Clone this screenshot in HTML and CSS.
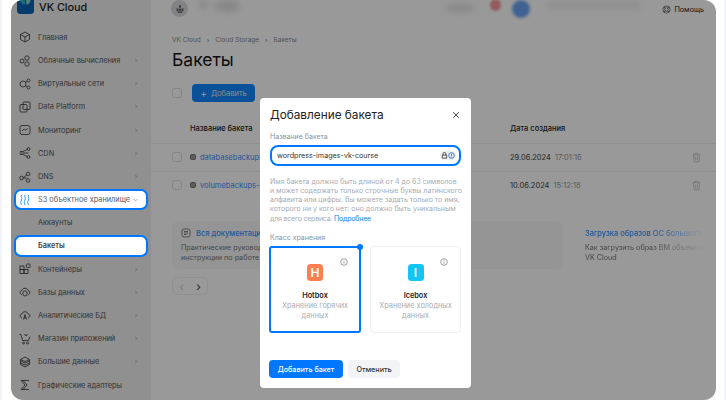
FILE: index.html
```html
<!DOCTYPE html>
<html lang="ru">
<head>
<meta charset="utf-8">
<title>VK Cloud</title>
<link rel="stylesheet" href="styles.css">
</head>
<body>
<div class="window">
  <aside class="sidebar">
    <div class="brand">
      <svg class="brand-logo" viewBox="0 0 17 17"><rect width="17" height="17" rx="3.5" fill="#0a63b8"/><path d="M3 0h5v7.5C5 7.500 3 5 3 0z" fill="#33b5c9"/><path d="M14 0H9.200v7.500C12 7.500 14 5 14 0z" fill="#7fd8d0"/></svg>
      <span>VK Cloud</span>
    </div>
    <nav class="nav">
      <a class="nav-item"><svg class="ni" viewBox="0 0 12 12"><path d="M6 1l4.500 2.500v5L6 11 1.500 8.500v-5zM1.500 3.500L6 6l4.500-2.500M6 6v5"/></svg><span class="nt">Главная</span></a>
      <a class="nav-item"><svg class="ni" viewBox="0 0 12 12"><circle cx="8" cy="3" r="2.200"/><circle cx="8" cy="9" r="2.200"/><circle cx="3" cy="6" r="2"/></svg><span class="nt">Облачные вычисления</span><i class="chev"></i></a>
      <a class="nav-item"><svg class="ni" viewBox="0 0 12 12"><circle cx="4" cy="6" r="3"/><circle cx="9.500" cy="2.500" r="1.500"/><circle cx="9.500" cy="9.500" r="1.500"/><path d="M6.500 4.300L8.300 3.300M6.500 7.700l1.800 1"/></svg><span class="nt">Виртуальные сети</span><i class="chev"></i></a>
      <a class="nav-item"><svg class="ni" viewBox="0 0 12 12"><rect x="1" y="3.500" width="7" height="7.500" rx="1"/><rect x="4" y="1" width="7" height="7.500" rx="1"/></svg><span class="nt">Data Platform</span><i class="chev"></i></a>
      <a class="nav-item"><svg class="ni" viewBox="0 0 12 12"><rect x="1" y="1.500" width="10" height="9" rx="2"/><path d="M3 7l2-2 1.500 1L9 4.500"/></svg><span class="nt">Мониторинг</span><i class="chev"></i></a>
      <a class="nav-item"><svg class="ni" viewBox="0 0 12 12"><circle cx="9.500" cy="2" r="1.400"/><circle cx="9.500" cy="10" r="1.400"/><path d="M1 4.500h3L8.200 2.500M1 7.500h3l4.200 2M.5 6h9"/></svg><span class="nt">CDN</span><i class="chev"></i></a>
      <a class="nav-item"><svg class="ni" viewBox="0 0 12 12"><circle cx="2.500" cy="7" r="1.800"/><circle cx="9" cy="3" r="1.800"/><circle cx="9" cy="9.500" r="1.800"/><path d="M4.300 7l3.200-3M4.300 7h3.400"/></svg><span class="nt">DNS</span><i class="chev"></i></a>
      <a class="nav-item hl"><svg class="ni s3" viewBox="0 0 12 12"><path d="M2.500 1c-1 2 1 3 0 5s-1 3 0 5M6 1c-1 2 1 3 0 5s-1 3 0 5M9.500 1c-1 2 1 3 0 5s-1 3 0 5"/></svg><span class="nt">S3 объектное хранилище</span><i class="chev down"></i></a>
      <a class="nav-item"><span class="nt sub">Аккаунты</span></a>
      <a class="nav-item hl strong"><span class="nt sub">Бакеты</span></a>
      <a class="nav-item"><svg class="ni" viewBox="0 0 12 12"><rect x="1" y="3" width="4" height="3.500"/><rect x="1" y="6.500" width="4" height="4"/><rect x="5" y="6.500" width="4" height="4"/><rect x="7.500" y="1" width="3.500" height="3.500" rx=".6"/></svg><span class="nt">Контейнеры</span><i class="chev"></i></a>
      <a class="nav-item"><svg class="ni" viewBox="0 0 12 12"><path d="M3 8.500C.5 8 .5 4.500 3 4.500 3.500 1.500 8.500 1.500 9 4.500c2.500 0 2.500 3.500 0 4"/><ellipse cx="6" cy="7.500" rx="2.200" ry="2.500"/></svg><span class="nt">Базы данных</span><i class="chev"></i></a>
      <a class="nav-item"><svg class="ni" viewBox="0 0 12 12"><path d="M3 9C.5 8.500.5 5 3 5 3.500 2 8.500 2 9 5c2.500 0 2.500 3.500 0 4"/><path d="M4.500 10.500L6 5.500l1.500 5M5 9h2"/></svg><span class="nt">Аналитические БД</span><i class="chev"></i></a>
      <a class="nav-item"><svg class="ni" viewBox="0 0 12 12"><path d="M.5 1.500h1.500L3.500 7.500h6l1.500-4M5.500 1L7 3M8.500 1L7 3"/><circle cx="4.500" cy="10" r="1"/><circle cx="8.500" cy="10" r="1"/></svg><span class="nt">Магазин приложений</span><i class="chev"></i></a>
      <a class="nav-item"><svg class="ni" viewBox="0 0 12 12"><path d="M6 1l4.500 2.500v5L6 11 1.500 8.500v-5zM1.500 5L6 7l4.500-2M1.500 7L6 9l4.500-2M1.500 3.500L6 5.500l4.500-2"/></svg><span class="nt">Большие данные</span><i class="chev"></i></a>
      <a class="nav-item"><svg class="ni" viewBox="0 0 12 12"><path d="M2 1.500h8M2 10.500h8M2 1.500L6 6l-4 4.500M4 1.500L8 6l-4 4.500"/></svg><span class="nt">Графические адаптеры</span></a>
    </nav>
  </aside>
  <main class="main">
    <header class="topbar">
      <div class="tb-avatar"><svg viewBox="0 0 12 12"><path d="M5 1.500h2v3H5zM2 5.500h2v3H2zM5 5.500h2v3H5zM8 5.500h2v3H8zM3 9h6v1.500H3z"/></svg></div>
      <div class="tb-blob tb-a"></div>
      <div class="tb-blob tb-b"></div>
      <div class="tb-spacer"></div>
      <div class="tb-blob tb-c"></div>
      <div class="tb-red"></div>
      <div class="tb-blue"></div>
      <div class="tb-lines"></div>
      <a class="help"><svg viewBox="0 0 10 10"><circle cx="5" cy="5" r="4"/><circle cx="5" cy="5" r="2"/><path d="M2.200 2.200l1.400 1.400M7.800 2.200L6.400 3.600M2.200 7.800l1.400-1.400M7.800 7.800L6.400 6.400"/></svg>Помощь</a>
    </header>
    <div class="crumbs"><span>VK Cloud</span><b>›</b><span>Cloud Storage</span><b>›</b><span>Бакеты</span></div>
    <h1 class="title">Бакеты</h1>
    <div class="toolbar">
      <span class="check"></span>
      <button class="add"><span class="plus">+</span>Добавить</button>
    </div>
    <div class="table">
      <div class="tr th"><span></span><span>Название бакета</span><span>Дата создания</span><span></span></div>
      <div class="tr"><span class="check"></span><span class="namecell"><i class="bi"></i><a>databasebackups-vk-cloud</a></span><span class="date">29.06.2024<em>17:01:16</em></span><svg class="trash" viewBox="0 0 10 10"><path d="M1.500 2.500h7M3.500 2.500V1.200h3v1.300M2.300 2.500l.5 6.500h4.400l.5-6.500M4.200 4v3.500M5.800 4v3.500"/></svg></div>
      <div class="tr"><span class="check"></span><span class="namecell"><i class="bi"></i><a>volumebackups-vk-cloud</a></span><span class="date">10.06.2024<em>15:12:18</em></span><svg class="trash" viewBox="0 0 10 10"><path d="M1.500 2.500h7M3.500 2.500V1.200h3v1.300M2.300 2.500l.5 6.500h4.400l.5-6.500M4.200 4v3.500M5.800 4v3.500"/></svg></div>
    </div>
    <section class="docs">
      <article class="doc">
        <h3><svg viewBox="0 0 10 10"><rect x="1" y="1" width="8" height="8" rx="2"/><path d="M3 3.500h4M3 5h4M3 6.500h2.500"/></svg>Вся документация</h3>
        <p>Практические руководства по работе с Cloud Storage с помощью AWS CLI,<br>инструкции по работе с бакетами</p>
      </article>
      <article class="doc doc-fade">
        <h3>Загрузка образов ОС большого</h3>
        <p>Как загрузить образ ВМ объемом б<br>VK Cloud</p>
      </article>
    </section>
    <div class="pager"><span class="off">‹</span><span>›</span></div>
  </main>
  <div class="scrim"></div>
  <form class="modal">
    <div class="m-head"><h2>Добавление бакета</h2><svg class="close" viewBox="0 0 10 10"><path d="M1.500 1.500l7 7M8.500 1.500l-7 7"/></svg></div>
    <label class="m-label">Название бакета</label>
    <div class="input"><span>wordpress-images-vk-course</span><span class="pw"><svg viewBox="0 0 8 8"><path d="M1.500 3.500h5v3.500h-5zM2.500 3.500V2a1.500 1.500 0 013 0v1.500" /></svg><svg class="pw-blue" viewBox="0 0 8 8"><circle cx="4" cy="4" r="3.200"/><path d="M4 2.200v2.600M4 5.500v.6"/></svg></span></div>
    <p class="m-help">Имя бакета должно быть длиной от 4 до 63 символов<br>и может содержать только строчные буквы латинского<br>алфавита или цифры. Вы можете задать только то имя,<br>которого ни у кого нет: оно должно быть уникальным<br><span class="tight">для всего сервиса. <a>Подробнее</a></span></p>
    <label class="m-label m-class">Класс хранения</label>
    <div class="cards">
      <div class="card active">
        <i class="dot"></i>
        <svg class="info" viewBox="0 0 8 8"><circle cx="4" cy="4" r="3.300"/><path d="M4 3.500v2.300M4 2.200v.6"/></svg>
        <span class="badge hot">H</span>
        <strong>Hotbox</strong>
        <span class="cd">Хранение горячих данных</span>
      </div>
      <div class="card">
        <svg class="info" viewBox="0 0 8 8"><circle cx="4" cy="4" r="3.300"/><path d="M4 3.500v2.300M4 2.200v.6"/></svg>
        <span class="badge ice">I</span>
        <strong>Icebox</strong>
        <span class="cd">Хранение холодных данных</span>
      </div>
    </div>
    <div class="m-foot">
      <button type="button" class="primary">Добавить бакет</button>
      <button type="button" class="ghost">Отменить</button>
    </div>
  </form>
</div>
</body>
</html>
```
FILE: styles.css
```css
* { box-sizing: border-box; }
html, body { margin: 0; height: 100%; }
body {
  width: 726px; height: 400px; overflow: hidden;
  background: #fff;
  font-family: Inter, "Noto Sans", sans-serif;
  padding-left: 11px;
  position: relative;
}
body::before, body::after { content: ""; position: absolute; top: 0; bottom: 0; background: #f3f3fa; width: 2px; }
body::before { left: 0; }
body::after { right: 0; }
.window {
  position: relative; width: 705px; height: 400px;
  display: flex; overflow: hidden;
  border-radius: 12px;
  background: #fff;
}
.sidebar { width: 140px; flex: none; background: #f0f0f0; padding: 0 3px; }
.brand { height: 14px; margin-bottom: 11.8px; display: flex; align-items: center; padding-left: 3px; gap: 5px; font-size: 10.800px; font-weight: 500; color: #222; }
.brand-logo { width: 17px; height: 17px; align-self: flex-end; flex: none; }
.nav { display: flex; flex-direction: column; }
.nav-item { height: 23.2px; display: flex; align-items: center; font-size: 7.350px; color: #555; padding-left: 5px; padding-right: 11px; flex: none; }
.ni { width: 12px; height: 12px; fill: none; stroke: #333; stroke-width: .8; flex: none; margin-right: 7px; }
.nt { flex: 1; white-space: nowrap; }
.sub { padding-left: 19px; }
.chev { width: 3px; height: 3px; border-top: 1px solid #c4c4c4; border-right: 1px solid #c4c4c4; transform: rotate(45deg); flex: none; }
.chev.down { transform: rotate(135deg); border-color: #bbb; }
.hl {
  position: relative; z-index: 3; background: #fff;
  border: 2px solid #0077ff; border-radius: 7px;
  padding-left: 3px; padding-right: 9px;
  color: #55585f;
}
.nav-item.hl:nth-child(8) { height: 21px; margin: 1px 0; }
.nav-item.hl:nth-child(10) { height: 22px; margin: .6px 0; }
.s3 { stroke: #0077ff; }
.strong { font-weight: 600; color: #444; }
.main { flex: 1; min-width: 0; padding: 0 0 0 21px; background: #fff; }
.topbar { height: 17px; display: flex; align-items: flex-start; margin-bottom: 17px; }
.tb-avatar { width: 17px; height: 17px; border-radius: 50%; background: #d8d8e0; margin-left: -1px; display: flex; align-items: center; justify-content: center; }
.tb-avatar svg { width: 10px; height: 10px; fill: #555; }
.tb-blob { background: #e0e0e0; border-radius: 50%; filter: blur(3px); }
.tb-a { width: 9px; height: 9px; margin-left: 11px; }
.tb-b { width: 26px; height: 12px; margin-left: 6px; }
.tb-spacer { flex: 1; }
.tb-c { width: 30px; height: 8px; margin-top: 4px; margin-right: 15px; }
.tb-red { width: 11px; height: 12px; border-radius: 50%; background: #f59a9a; filter: blur(1px); margin-right: 11px; margin-top: -1px; }
.tb-blue { width: 18px; height: 18px; border-radius: 50%; background: #6ba3f5; filter: blur(1.500px); margin-right: 18px; }
.tb-lines { width: 92px; height: 7px; margin-top: 2px; background: #ececec; filter: blur(3px); margin-right: 22px; }
.help { display: flex; align-items: center; gap: 3px; font-size: 7.200px; color: #222; margin-top: 4px; margin-right: 12px; height: 10px; }
.help svg { width: 9px; height: 9px; fill: none; stroke: #333; stroke-width: .7; }
.crumbs { display: flex; gap: 6px; font-size: 6.500px; color: #8a8a8a; height: 12px; align-items: center; }
.crumbs b { font-weight: 400; color: #777; }
.title { margin: 3px 0 0; font-size: 17.500px; font-weight: 400; color: #151515; line-height: 22px; }
.toolbar { display: flex; align-items: center; gap: 10px; margin-top: 13px; height: 18px; }
.check { width: 10px; height: 10px; border: 1px solid #ddd; border-radius: 3px; display: block; flex: none; }
.add { width: 63px; height: 18px; background: #1188ff; color: #e4e4e4; border: 0; border-radius: 4px; font: 7.500px Inter, sans-serif; display: flex; align-items: center; justify-content: center; gap: 4px; padding: 0; }
.plus { font-size: 10px; line-height: 1; color: #fff; }
.table { margin-top: 11px; }
.tr { display: grid; grid-template-columns: 18px 320px 181px 16px; align-items: center; height: 27.500px; border-bottom: 1px solid #efefef; font-size: 7.500px; margin-left: -21px; padding-left: 21px; }
.th { height: 31px; font-weight: 500; color: #222; }
.namecell { display: flex; align-items: center; gap: 4px; }
.bi { width: 6px; height: 6px; border-radius: 1.500px; background: #999; border: 1px solid #777; }
.namecell a { color: #3b90ff; }
.date { color: #444; }
.date em { font-style: normal; color: #999; margin-left: 4px; }
.trash { width: 11px; height: 11px; fill: none; stroke: #c0c0c0; stroke-width: .7; }
.tr:last-child { border-bottom: 0; }
.docs { display: flex; gap: 22px; margin-top: 22px; overflow: hidden; width: 533px; }
.doc { flex: none; width: 391px; height: 48px; background: #f8f8f8; border-radius: 7px; padding: 7px 9px; white-space: nowrap; }
.doc h3 { margin: 0; display: flex; gap: 5px; align-items: center; font-size: 7.500px; font-weight: 500; color: #3b90ff; height: 10px; white-space: nowrap; }
.doc h3 svg { width: 10px; height: 10px; fill: none; stroke: #555; stroke-width: .7; }
.doc p { margin: 5px 0 0; font-size: 7.200px; line-height: 10px; color: #777; }
.doc-fade { background: none; width: 120px; padding-left: 0; -webkit-mask-image: linear-gradient(90deg, #000 55%, transparent 100%); mask-image: linear-gradient(90deg, #000 55%, transparent 100%); }
.pager { display: flex; width: 36px; height: 18px; margin-top: 8px; border: 1px solid #f0f0f0; border-radius: 6px; align-items: center; justify-content: space-around; font-size: 12px; color: #444; }
.off { color: #ccc; }
.scrim { position: absolute; inset: 0; background: rgba(0, 0, 0, .4); z-index: 2; }
.modal {
  position: absolute; left: 249px; top: 98px; z-index: 4;
  width: 211px; height: 290px; background: #fff; border-radius: 4px;
  padding: 0 10px 0 9px; display: flex; flex-direction: column;
}
.m-head { display: flex; justify-content: space-between; align-items: center; height: 19px; margin-top: 7px; padding-left: 1px; }
.m-head h2 { margin: 0; font-size: 11.800px; font-weight: 400; color: #222; white-space: nowrap; }
.close { width: 8px; height: 8px; fill: none; stroke: #333; stroke-width: 1.100; margin-right: 1px; }
.m-label { font-size: 7px; color: #909399; margin-top: 7px; height: 12px; padding-left: 1px; line-height: 12px; }
.input { margin: 2px 0 0 1px; width: 191px; height: 21px; border: 2px solid #0077ff; border-radius: 8px; display: flex; justify-content: space-between; align-items: center; padding: 0 3px 0 5px; font-size: 7.200px; color: #333; }
.pw { display: flex; gap: 0; background: #eee; border-radius: 4px; padding: 1px; }
.pw svg { width: 7px; height: 7px; fill: none; stroke: #333; stroke-width: .9; }
.pw .pw-blue { stroke: #0a5fd0; }
.m-help { margin: 10.5px 0 0 1px; font-size: 7px; line-height: 9.300px; color: #a8acb4; white-space: nowrap; }
.m-help a { color: #1a7fe8; font-size: 7px; }
.tight { letter-spacing: -.2px; }
.m-class { margin-top: 9px; }
.cards { display: flex; gap: 9px; margin-top: 2px; }
.card { position: relative; width: 91px; height: 87px; border: 1px solid #eceef0; border-radius: 4px; display: flex; flex-direction: column; align-items: center; padding-top: 17px; font-size: 7.350px; text-align: center; }
.card.active { width: 92px; border: 2px solid #0077ff; border-radius: 3px; padding-top: 16px; }
.dot { position: absolute; top: -4px; right: -4px; width: 6px; height: 6px; border-radius: 50%; background: #0077ff; }
.info { position: absolute; top: 11px; right: 12px; width: 8px; height: 8px; fill: none; stroke: #777; stroke-width: .7; }
.card.active .info { top: 10px; right: 11px; }
.badge { width: 16px; height: 17px; border-radius: 3.500px; color: #fff; font-size: 12px; font-weight: 600; display: flex; align-items: center; justify-content: center; }
.hot { background: #ff7f50; }
.ice { background: #14c4f5; }
.card strong { margin-top: 10.5px; font-weight: 600; color: #222; line-height: 10px; }
.cd { color: #a8acb4; line-height: 10px; width: 76px; }
.m-foot { display: flex; gap: 5px; margin-top: auto; margin-bottom: 10px; }
.primary, .ghost { height: 18px; border: 0; border-radius: 4px; font: 500 7.200px Inter, sans-serif; padding: 0; }
.primary { width: 74px; background: #0077ff; color: #fff; }
.ghost { width: 52px; background: #f3f4f7; color: #333; }
```
